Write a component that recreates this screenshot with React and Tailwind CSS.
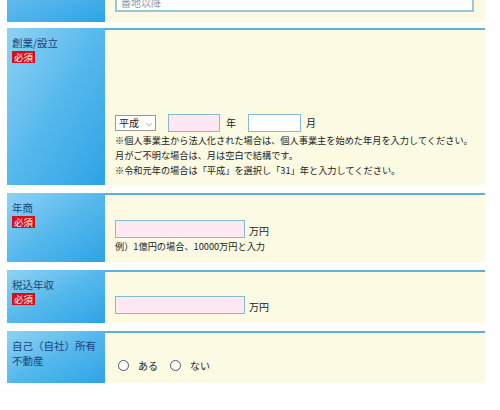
import React from "react";

const font = { fontFamily: '"Noto Sans CJK JP", "Noto Sans", sans-serif' };

function Badge() {
  return (
    <span className="inline-block bg-[#d3101c] text-white text-[9.5px] leading-[12px] px-[2px] mt-[1px]">必須</span>
  );
}

function Label({ children, required }) {
  return (
    <div className="w-[98px] shrink-0 bg-gradient-to-br from-[#8ed2f3] via-[#55b8ec] to-[#2aa3e6] px-[5px] pt-[7px] text-[10.5px] leading-[15px] text-[#16467a] whitespace-nowrap">
      {children}
      {required && <div className="leading-[12px]"><Badge /></div>}
    </div>
  );
}

function PinkInput({ w = "w-[130px]" }) {
  return <div className={w + " h-[18px] bg-[#fde8f3] border border-[#86bcd3]"} />;
}

function Radio({ label }) {
  return (
    <span className="inline-flex items-center gap-[9px] mr-[12px]">
      <span className="w-[11px] h-[11px] rounded-full border border-[#555] bg-white inline-block" />
      <span>{label}</span>
    </span>
  );
}

export default function App() {
  return (
    <div className="w-[500px] h-[410px] bg-white overflow-hidden" style={font}>
      <div className="pl-[7px] mt-[-20px] flex flex-col gap-[6px]">
        {/* Row 1 (partial) */}
        <div className="flex h-[42px]">
          <div className="w-[98px] shrink-0 bg-gradient-to-br from-[#6cc3f0] to-[#2aa3e6]" />
          <div className="w-[380px] bg-[#fcfae2] pl-[10px] pt-[12px]">
            <div className="w-[359px] h-[20px] bg-white border-2 border-[#9cc6d2] text-[10px] leading-[18px] text-[#999] px-[4px] overflow-hidden">番地以降</div>
          </div>
        </div>

        {/* Row 2 */}
        <div className="flex h-[157px]">
          <Label required>創業/設立</Label>
          <div className="w-[380px] bg-[#fcfae2] border-t-2 border-[#5cb2d6] pl-[10px] pt-[84px] text-[9.2px] text-[#222]">
            <div className="flex items-center h-[17px] text-[10px]">
              <div className="w-[41px] h-[16px] bg-white border border-[#999] flex items-center justify-between px-[3px] leading-none">
                <span>平成</span>
                <span className="text-[8px] text-[#555]">⌵</span>
              </div>
              <PinkInput w="w-[52px] ml-[12px]" />
              <span className="ml-[6px]">年</span>
              <div className="w-[53px] h-[18px] bg-white border border-[#86bcd3] ml-[12px]" />
              <span className="ml-[5px]">月</span>
            </div>
            <div className="leading-[15px] mt-[2px] whitespace-nowrap">
              <div>※個人事業主から法人化された場合は、個人事業主を始めた年月を入力してください。</div>
              <div>月がご不明な場合は、月は空白で結構です。</div>
              <div>※令和元年の場合は「平成」を選択し「31」年と入力してください。</div>
            </div>
          </div>
        </div>

        {/* Row 3 */}
        <div className="flex h-[69px] mt-[2px]">
          <Label required>年商</Label>
          <div className="w-[380px] bg-[#fcfae2] border-t-2 border-[#5cb2d6] pl-[10px] pt-[24px] text-[9.2px] text-[#222]">
            <div className="flex items-center">
              <PinkInput />
              <span className="ml-[4px] mt-[4px] text-[10px]">万円</span>
            </div>
            <div className="leading-[15px] mt-[1px]">例）1億円の場合、10000万円と入力</div>
          </div>
        </div>

        {/* Row 4 */}
        <div className="flex h-[53px] mt-[2px]">
          <Label required>税込年収</Label>
          <div className="w-[380px] bg-[#fcfae2] border-t-2 border-[#5cb2d6] pl-[10px] pt-[23px] text-[10px] text-[#222]">
            <div className="flex items-center">
              <PinkInput />
              <span className="ml-[4px] mt-[4px]">万円</span>
            </div>
          </div>
        </div>

        {/* Row 5 */}
        <div className="flex h-[52px] mt-[2px]">
          <Label>
            自己（自社）所有
            <br />
            不動産
          </Label>
          <div className="w-[380px] bg-[#fcfae2] border-t-2 border-[#5cb2d6] pl-[13px] pt-[25px] text-[10px] text-[#222]">
            <div className="flex items-center">
              <Radio label="ある" />
              <Radio label="ない" />
            </div>
          </div>
        </div>
      </div>
    </div>
  );
}
